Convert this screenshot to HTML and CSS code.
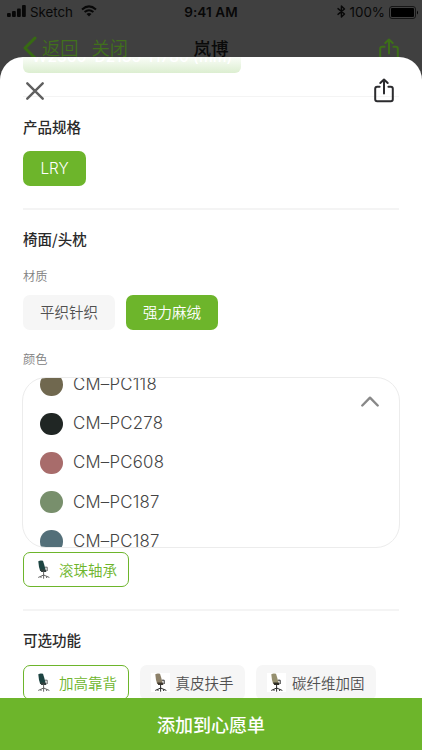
FILE: index.html
```html
<!DOCTYPE html>
<html lang="zh-CN">
<head>
<meta charset="utf-8">
<meta name="viewport" content="width=device-width, initial-scale=1">
<title>岚博</title>
<link rel="stylesheet" href="styles.css">
</head>
<body>
<svg width="0" height="0" class="defs">
  <symbol id="share" viewBox="0 0 20 25">
    <path d="M5.6 8.7H3.2Q1.2 8.7 1.2 10.7V21.3Q1.2 23.3 3.2 23.3H16.8Q18.8 23.3 18.8 21.3V10.7Q18.8 8.7 16.8 8.7H14.4M10 15.5V2M6.3 5L10 1.5L13.7 5"/>
  </symbol>
  <symbol id="chair" viewBox="0 0 19 19">
    <path class="back" d="M4.3 1.2Q6.5-.2 9 .8L9.8 3.2L11.4 8.8L10.4 11H6.2L5 7Z"/>
    <path class="seat" d="M6.2 9.6H12Q13.2 10.8 12 12H7.2Z"/>
    <path class="frame" d="M11.4 7.2H13.2V10.6M9.6 12V15.2M4.6 17.3L9.6 15L15 17.3M9.6 15V18.3M7 16.8V17.6M12.6 16.8V17.6"/>
  </symbol>
</svg>
<div class="screen">
  <header class="page-head">
    <div class="status">
      <div class="carrier">
        <svg class="signal" viewBox="0 0 19 12"><rect y="8" width="3.8" height="4" rx="1"/><rect x="5" y="6" width="3.8" height="6" rx="1"/><rect x="10" y="3.4" width="3.8" height="8.6" rx="1"/><rect x="15" width="3.8" height="12" rx="1"/></svg>
        <span>Sketch</span>
        <svg class="wifi" viewBox="0 0 16 12"><path d="M1 4.4Q8-1.7 15 4.4M3.6 7.1Q8 3.3 12.4 7.1"/><path class="dot" d="M5.5 9Q8 7 10.5 9L8 11.6Z"/></svg>
      </div>
      <div class="clock">9:41 AM</div>
      <div class="power">
        <svg class="bt" viewBox="0 0 9 13"><path d="M1 3.6L7.5 9L4.4 12V1L7.5 4L1 9.4"/></svg>
        <span>100%</span>
        <svg class="battery" viewBox="0 0 30 13"><rect class="shell" x=".5" y=".5" width="26" height="12" rx="2.5"/><rect x="2" y="2" width="23" height="9" rx="1"/><path d="M28 4.4Q30 6.5 28 8.6Z"/></svg>
      </div>
    </div>
    <nav class="nav">
      <div class="nav-left">
        <svg class="chev" viewBox="0 0 14 24"><path d="M12 2L2 12L12 22"/></svg>
        <span>返回</span><span>关闭</span>
      </div>
      <div class="nav-title">岚博</div>
      <svg class="nav-share"><use href="#share"/></svg>
    </nav>
  </header>
  <main class="sheet">
    <div class="peek">W2360*D2135*H780 (mm)</div>
    <div class="tools">
      <svg class="close" viewBox="0 0 18 18"><path d="M1.3 1.3L16.7 16.7M16.7 1.3L1.3 16.7"/></svg>
      <svg class="share"><use href="#share"/></svg>
    </div>
    <h2 class="spec-title">产品规格</h2>
    <div class="row"><button class="chip on latin">LRY</button></div>
    <hr>
    <h2>椅面/头枕</h2>
    <h3>材质</h3>
    <div class="row"><button class="chip">平织针织</button><button class="chip on">强力麻绒</button></div>
    <h3 class="color-title">颜色</h3>
    <div class="picker">
      <ul>
        <li><i class="swatch olive"></i>CM–PC118</li>
        <li><i class="swatch black"></i>CM–PC278</li>
        <li><i class="swatch rose"></i>CM–PC608</li>
        <li><i class="swatch green"></i>CM–PC187</li>
        <li><i class="swatch blue"></i>CM–PC187</li>
      </ul>
      <svg class="collapse" viewBox="0 0 18 11"><path d="M1.3 9.5L9 1.7L16.7 9.5"/></svg>
    </div>
    <div class="row bearing"><button class="chip pic picked"><svg class="chair teal"><use href="#chair"/></svg>滚珠轴承</button></div>
    <hr>
    <h2>可选功能</h2>
    <div class="row options">
      <button class="chip pic picked"><svg class="chair teal"><use href="#chair"/></svg>加高靠背</button>
      <button class="chip pic"><svg class="chair tan"><use href="#chair"/></svg>真皮扶手</button>
      <button class="chip pic"><svg class="chair khaki"><use href="#chair"/></svg>碳纤维加固</button>
    </div>
  </main>
  <button class="submit">添加到心愿单</button>
</div>
</body>
</html>
```
FILE: styles.css
```css
* { box-sizing: border-box; margin: 0; padding: 0; }
body { font-family: "Noto Sans CJK SC", sans-serif; color: #2a2a2a; }
button { border: 0; font-family: inherit; }
svg { display: block; flex: none; fill: none; stroke-linecap: round; stroke-linejoin: round; }
.defs { position: absolute; }
.screen { width: 422px; height: 750px; display: flex; flex-direction: column; overflow: hidden; background: #404040; }

.page-head { height: 57px; flex: none; overflow: hidden; }
.status { height: 25px; display: grid; grid-template-columns: 1fr auto 1fr; align-items: center; padding: 0 7px; font: 13.5px/25px Inter, sans-serif; color: #080808; }
.carrier, .power { display: flex; align-items: center; }
.carrier span { margin: 0 8px 0 4px; font-size: 13.3px; }
.signal { width: 19px; height: 12px; margin-top: -3px; fill: #080808; }
.wifi { width: 16px; height: 12px; margin-top: -3px; stroke: #080808; stroke-width: 2; stroke-linecap: butt; }
.dot { fill: #080808; stroke: none; }
.clock { font-weight: 600; letter-spacing: .1px; }
.power { justify-content: flex-end; gap: 4px; }
.power span { font-size: 13.4px; }
.bt { width: 9px; height: 13px; margin-top: -3px; stroke: #080808; stroke-width: 1.4; }
.battery { width: 30px; height: 13px; margin-right: -4px; margin-top: -1px; fill: #000; }
.shell { fill: none; stroke: #161616; }
.nav { height: 46px; display: grid; grid-template-columns: 1fr auto 1fr; padding: 0 23px; align-items: center; font-size: 18.3px; line-height: 44px; }
.nav-left { display: flex; align-items: center; color: #41701c; font-weight: 350; }
.nav-left span { margin: -2px 13px 0 0; }
.chev { width: 14px; height: 24px; margin-right: 5px; stroke: #376a12; stroke-width: 3; }
.nav-title { color: #0a0a0a; font-weight: 500; font-size: 17.5px; }
.nav-share { width: 20px; height: 25px; justify-self: end; stroke: #3d6f18; stroke-width: 2; margin-top: 4px; }

.sheet { flex: 1; min-height: 0; overflow: hidden; background: #fff; border-radius: 23px 23px 0 0; padding: 0 23px; }
.peek { width: 218px; height: 16px; overflow: hidden; background: linear-gradient(#fafdf8, #dceed0); border-radius: 0 0 6px 6px; font: 500 15.5px/0 Inter, sans-serif; text-align: center; color: #fff; white-space: nowrap; }
.tools { height: 24px; border-bottom: 1px solid #f4f4f4; display: flex; justify-content: space-between; padding: 5px 5px 0 3px; }
.close { width: 18px; height: 18px; margin-top: 4px; stroke: #606060; stroke-width: 2.4; }
.share { width: 20px; height: 25px; stroke: #2b2b2e; stroke-width: 2; }
h2 { font-size: 14.5px; font-weight: 500; line-height: 22px; }
.spec-title { margin-top: 19px; }
h3 { font-size: 12.2px; font-weight: 350; line-height: 18px; color: #808080; margin-top: 17px; }
.row { display: flex; gap: 11px; margin-top: 10px; }
.spec-title + .row { margin-top: 13px; }
.chip { height: 35px; border-radius: 7px; padding: 0 17px; background: #f6f6f6; color: #505050; font-size: 14.5px; font-weight: 350; line-height: 33px; padding-bottom: 2px; white-space: nowrap; }
.on { background: #6db52b; color: #fff; }
.latin { width: 63px; padding: 0; text-align: center; font: 300 15.3px/35px Inter, sans-serif; }
hr { height: 2px; border: 0; background: #f4f4f4; margin: 22px 0 18px; }
.color-title { margin-top: 20px; }
.picker { height: 171px; margin: 9px -1px 0; border: 1px solid #ececec; border-radius: 24px; overflow: hidden; display: flex; justify-content: space-between; }
ul { list-style: none; margin: -13px 0 0 17px; }
li { height: 39.2px; display: flex; align-items: center; font: 300 16.8px/39px Inter, sans-serif; letter-spacing: .25px; color: #444; }
.swatch { width: 22.5px; height: 22.5px; border-radius: 50%; margin-right: 10.5px; }
.olive { background: #70684f; }
.black { background: #202624; }
.rose { background: #a86c6b; }
.green { background: #788f6c; }
.blue { background: #536f79; }
.collapse { width: 18px; height: 11px; margin: 18px 20px 0 0; stroke: #888; stroke-width: 2.4; }
.pic { display: flex; align-items: center; padding: 0 11.5px 1px 11px; }
.picked { background: #fff; color: #6db52b; border: 1.5px solid #6db52b; padding: 0 10.5px 1px 10px; }
.bearing { margin-top: 4px; }
.options { margin-top: 14px; }
.chair { width: 19px; height: 19px; margin-right: 6px; background: #fff; }
.back { fill: var(--back); }
.seat { fill: var(--seat); }
.frame { stroke: var(--frame); stroke-width: 1; }
.teal { --back: #1d4442; --seat: #34403f; --frame: #666; }
.tan { --back: #8c8069; --seat: #403a31; --frame: #2c2c2c; }
.khaki { --back: #96906f; --seat: #2e2c24; --frame: #2c2c2c; }
.submit { height: 52px; flex: none; background: #6db52b; color: #fff; font-size: 18px; font-weight: 500; line-height: 52px; }
```
